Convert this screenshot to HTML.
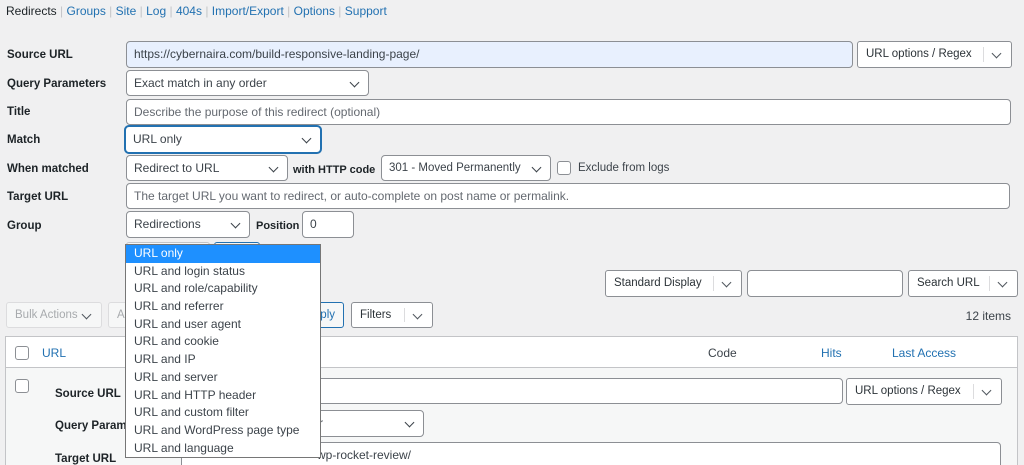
<!DOCTYPE html>
<html><head><style>
*{box-sizing:border-box;margin:0;padding:0}
html,body{width:1024px;height:465px;overflow:hidden}
body{background:#f0f0f1;font-family:"Liberation Sans",sans-serif;font-size:12px;color:#3c434a;position:relative}
.a{position:absolute;white-space:nowrap}
.l{font-weight:bold;color:#1d2327;font-size:11.5px;margin-top:2px}
.in{position:absolute;background:#fff;border:1px solid #8c8f94;border-radius:4px;padding:0 7px;line-height:24px;white-space:nowrap;overflow:hidden}
.ph{color:#646970}
.sel::after{content:"";position:absolute;right:10px;top:8px;width:6px;height:6px;border-right:1.5px solid #3c434a;border-bottom:1.5px solid #3c434a;transform:rotate(45deg)}
.btn{position:absolute;background:#fff;border:1px solid #8c8f94;border-radius:3px;padding:0 8px;line-height:25px;color:#2c3338;font-size:11.5px;white-space:nowrap}
.btn .dv{position:absolute;top:5px;bottom:5px;width:1px;background:#dcdcde}
.btn.c::after{content:"";position:absolute;right:11px;top:8px;width:6px;height:6px;border-right:1.5px solid #50575e;border-bottom:1.5px solid #50575e;transform:rotate(45deg)}
.cb{position:absolute;width:14px;height:14px;border:1px solid #8c8f94;border-radius:3px;background:#fff}
a,.lk{color:#2271b1;text-decoration:none}
.dd{position:absolute;left:125px;top:244px;width:196px;height:214px;background:#fff;border:1px solid #767676;font-size:12px;color:#3c434a}
.dd div{height:17.7px;line-height:17.7px;padding-left:8px}
.dd .h{background:#1e90ff;color:#fff}
</style></head><body>
<div class="a" style="left:6px;top:4px;font-size:12px;color:#c3c4c7"><span style="color:#1d2327">Redirects</span> | <a>Groups</a> | <a>Site</a> | <a>Log</a> | <a>404s</a> | <a>Import/Export</a> | <a>Options</a> | <a>Support</a></div>

<div class="a l" style="left:7px;top:47px">Source URL</div>
<div class="in" style="left:126px;top:41px;width:727px;height:27px;background:#e8f0fe">https://cybernaira.com/build-responsive-landing-page/</div>
<div class="btn c" style="left:857px;top:41px;width:155px;height:27px">URL options / Regex<span class="dv" style="left:125px"></span></div>

<div class="a l" style="left:7px;top:76px">Query Parameters</div>
<div class="in sel" style="left:126px;top:70px;width:243px;height:26px">Exact match in any order</div>

<div class="a l" style="left:7px;top:104px">Title</div>
<div class="in ph" style="left:126px;top:99px;width:885px;height:26px">Describe the purpose of this redirect (optional)</div>

<div class="a l" style="left:7px;top:132px">Match</div>
<div class="in sel" style="left:125px;top:126px;width:196px;height:27px;border-color:#2271b1;box-shadow:0 0 0 1px #2271b1">URL only</div>

<div class="a l" style="left:7px;top:161px">When matched</div>
<div class="in sel" style="left:126px;top:155px;width:162px;height:26px">Redirect to URL</div>
<div class="a l" style="left:293px;top:162px;font-size:11px">with HTTP code</div>
<div class="in sel" style="left:381px;top:155px;width:170px;height:26px;font-size:11.5px">301 - Moved Permanently</div>
<div class="cb" style="left:557px;top:161px"></div>
<div class="a" style="left:578px;top:162px;font-size:11.5px">Exclude from logs</div>

<div class="a l" style="left:7px;top:189px">Target URL</div>
<div class="in ph" style="left:126px;top:183px;width:884px;height:26px">The target URL you want to redirect, or auto-complete on post name or permalink.</div>

<div class="a l" style="left:7px;top:218px">Group</div>
<div class="in sel" style="left:126px;top:211px;width:124px;height:27px">Redirections</div>
<div class="a l" style="left:256px;top:218px;font-size:11px">Position</div>
<div class="in" style="left:302px;top:211px;width:52px;height:27px">0</div>

<div class="a" style="left:126px;top:242px;width:84px;height:10px;border:1px solid #c3c4c7;border-radius:3px;background:#f6f7f7"></div>
<div class="a" style="left:214px;top:242px;width:46px;height:10px;border:1px solid #2271b1;border-radius:3px;background:#f6f7f7"></div>

<div class="btn c" style="left:605px;top:270px;width:137px;height:27px">Standard Display<span class="dv" style="left:107px"></span></div>
<div class="in" style="left:747px;top:270px;width:156px;height:27px"></div>
<div class="btn c" style="left:908px;top:270px;width:110px;height:27px">Search URL<span class="dv" style="left:80px"></span></div>

<div class="btn c" style="left:6px;top:302px;width:96px;height:26px;border-color:#dcdcde;background:#f6f7f7;color:#a7aaad">Bulk Actions</div>
<div class="btn" style="left:108px;top:302px;width:100px;height:26px;border-color:#dcdcde;background:#f6f7f7;color:#a7aaad">A</div>
<div class="btn" style="left:300px;top:302px;width:44px;height:26px;border-color:#2271b1;background:#f6f7f7;color:#2271b1;text-align:right">ply</div>
<div class="btn c" style="left:351px;top:302px;width:82px;height:26px">Filters<span class="dv" style="left:52px"></span></div>
<div class="a" style="right:13px;top:309px">12 items</div>

<div class="a" style="left:5px;top:336px;width:1013px;height:140px;border:1px solid #c3c4c7;background:#f6f7f7"></div>
<div class="a" style="left:6px;top:337px;width:1011px;height:31px;background:#fff;border-bottom:1px solid #c3c4c7"></div>
<div class="cb" style="left:15px;top:346px"></div>
<div class="a lk" style="left:42px;top:346px">URL</div>
<div class="a" style="left:708px;top:346px">Code</div>
<div class="a lk" style="left:821px;top:346px">Hits</div>
<div class="a lk" style="left:892px;top:346px">Last Access</div>

<div class="cb" style="left:15px;top:379px"></div>
<div class="a l" style="left:55px;top:386px">Source URL</div>
<div class="in" style="left:181px;top:378px;width:662px;height:26px"></div>
<div class="btn c" style="left:846px;top:378px;width:156px;height:27px">URL options / Regex<span class="dv" style="left:126px"></span></div>
<div class="a l" style="left:55px;top:418px">Query Param</div>
<div class="in sel" style="left:181px;top:410px;width:243px;height:27px;text-indent:130px">r</div>
<div class="a l" style="left:55px;top:451px">Target URL</div>
<div class="in" style="left:181px;top:442px;width:820px;height:30px;padding-left:135px">wp-rocket-review/</div>

<div class="dd">
<div class="h">URL only</div>
<div>URL and login status</div>
<div>URL and role/capability</div>
<div>URL and referrer</div>
<div>URL and user agent</div>
<div>URL and cookie</div>
<div>URL and IP</div>
<div>URL and server</div>
<div>URL and HTTP header</div>
<div>URL and custom filter</div>
<div>URL and WordPress page type</div>
<div>URL and language</div>
</div>
</body></html>
